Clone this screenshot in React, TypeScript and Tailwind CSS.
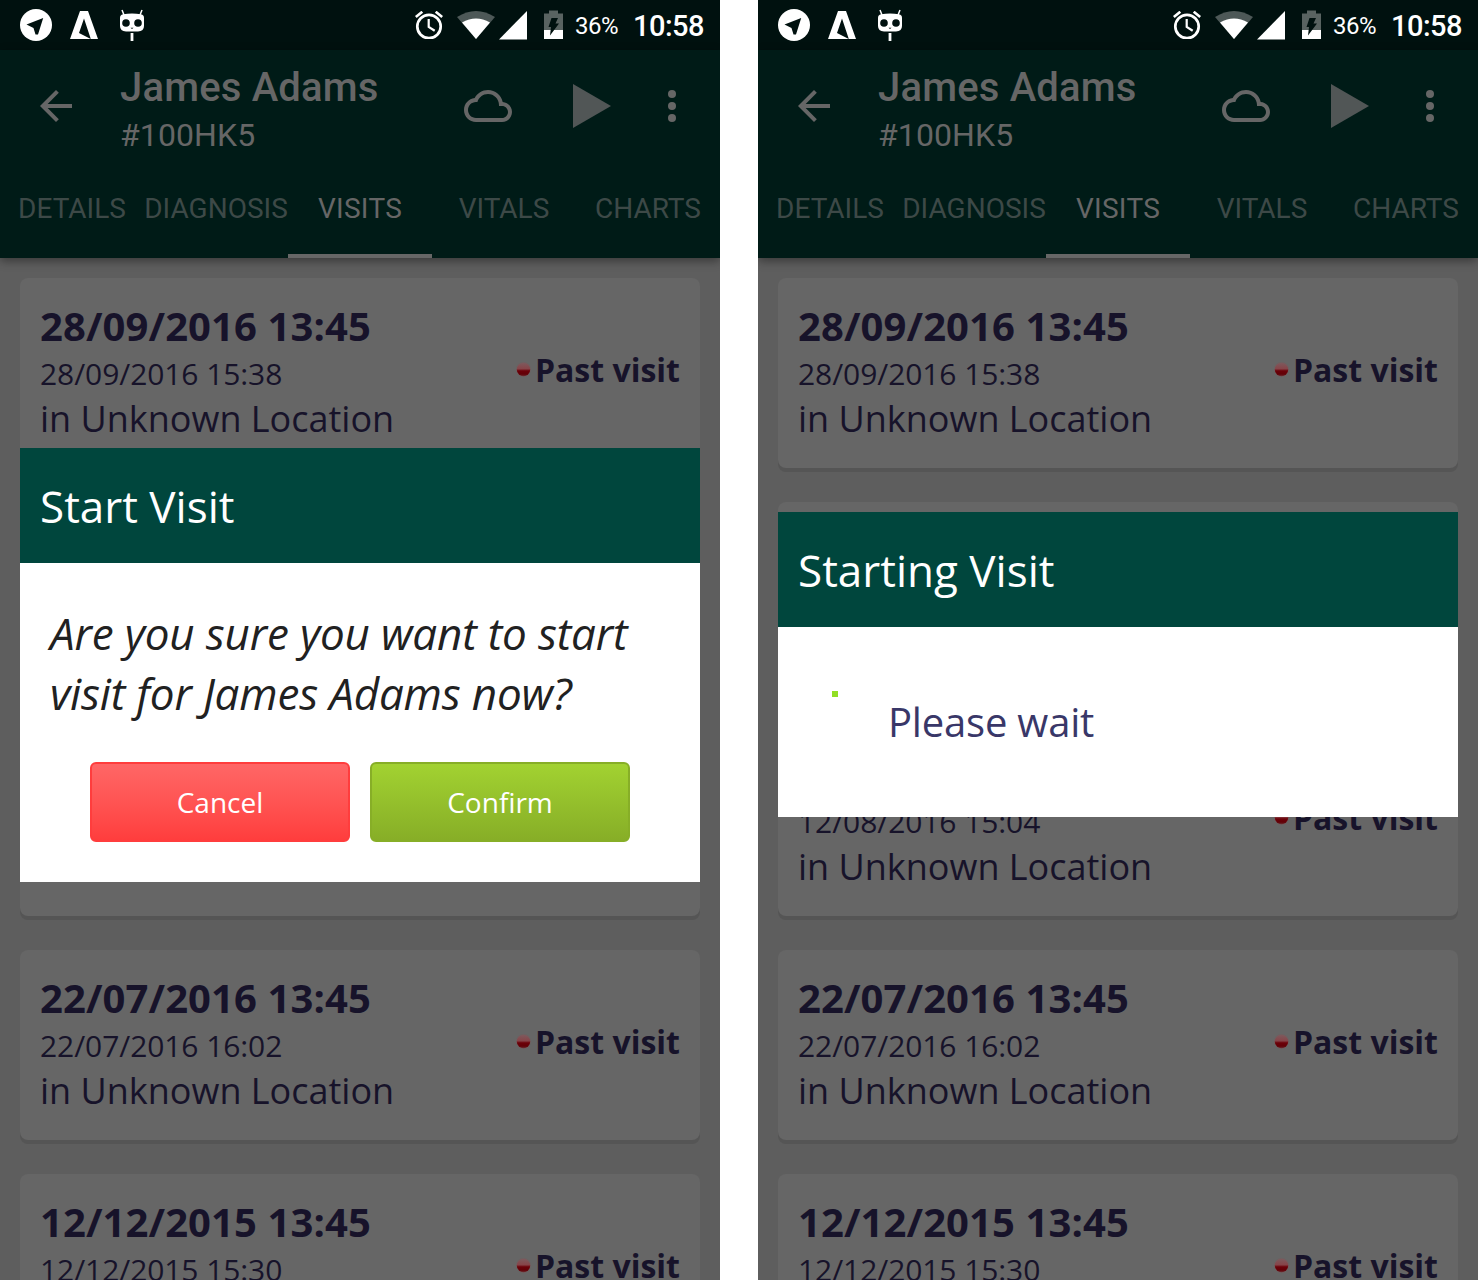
import React from "react";

type Visit = { start?: string; end: string } | null;

const firstVisit: Visit = { start: "28/09/2016 13:45", end: "28/09/2016 15:38" };
const olderVisits: Visit[] = [
  { start: "22/07/2016 13:45", end: "22/07/2016 16:02" },
  { start: "12/12/2015 13:45", end: "12/12/2015 15:30" },
];
const confirmVisits: Visit[] = [firstVisit, null, null, ...olderVisits];
const progressVisits: Visit[] = [firstVisit, null, { end: "12/08/2016 15:04" }, ...olderVisits];

const tabs = ["DETAILS", "DIAGNOSIS", "VISITS", "VITALS", "CHARTS"];

function StatusBar() {
  return (
    <div className="flex h-[50px] shrink-0 items-center bg-[#00110f] pl-5 font-[Roboto] text-white">
      <svg className="h-8 w-8" viewBox="0 0 32 32">
        <circle cx="16" cy="16" r="16" fill="#fff" />
        <path d="M6.5 15.5 23.2 9 18 25.5H15.5L13.5 19Z" fill="#00110f" />
      </svg>
      <svg className="ml-[18px] h-7 w-7" viewBox="0 0 28 28">
        <path d="M10 0h8L28 28h-7.200L14 7.500 9 22 20.800 28H0Z" fill="#fff" />
      </svg>
      <svg className="ml-[22px] h-8 w-6" viewBox="0 0 24 32">
        <path d="M2 1 4 6M22 1 20 6" stroke="#fff" strokeWidth="1.500" />
        <path d="M3 5.200Q12 4 21 5.200 24 5.700 24 9V17Q24 22 18 22.500H6Q0 22 0 17V9Q0 5.700 3 5.200Z" fill="#fff" />
        <path d="M10.600 24h2.800v8h-2.800z" fill="#fff" />
        <circle cx="6" cy="14" r="3.800" fill="#00110f" />
        <circle cx="18" cy="14" r="3.800" fill="#00110f" />
        <path d="M10.500 18.800h3L12 20.100Z" fill="#00110f" />
      </svg>
      <svg className="ml-[271px] h-[28px] w-7" viewBox="0 0 28 28" fill="none" stroke="#fff">
        <circle cx="14" cy="15.500" r="11.700" strokeWidth="2.700" />
        <path d="M13.700 8v8l6 3.800" strokeWidth="2.200" />
        <path d="M.8 6 7.300.8M27.200 6 20.700.8" strokeWidth="2.700" />
      </svg>
      <svg className="ml-[14px] h-7 w-[38px]" viewBox="0 0 38 28">
        <path d="M0 6Q19-6 38 6L19 28Z" fill="#4d5857" />
        <path d="M5 11.500Q19 3.500 33 11.500L19 28Z" fill="#fff" />
      </svg>
      <svg className="ml-1 h-[30px] w-7" viewBox="0 0 28 30">
        <path d="M28 1V29.500H0Z" fill="#fff" />
      </svg>
      <svg className="ml-[17px] h-[30px] w-[19px]" viewBox="0 0 19 30">
        <path d="M0 3.500h5V.5h9v3h5V20H0Z" fill="#596361" />
        <path d="M0 20h19v9H0Z" fill="#fff" />
        <path d="M7.500 8H14l-2.500 5.500H15L6 25.500l1-8.500H4.500Z" fill="#00110f" />
      </svg>
      <span className="ml-3 mt-0.5 w-[47px] text-[24px] leading-none tracking-[-0.5px] whitespace-nowrap">36%</span>
      <span className="ml-[11px] mt-[3px] text-[29px] font-medium leading-none tracking-[-0.5px]">10:58</span>
    </div>
  );
}

function AppHeader() {
  return (
    <header className="z-10 flex h-[208px] shrink-0 flex-col bg-[#001b17] font-[Roboto] text-[#666] shadow-[0_3px_9px_rgba(0,0,0,0.4)]">
      <div className="flex h-28 items-center pl-10">
        <svg className="h-8 w-8" viewBox="4 4 16 16" fill="currentColor">
          <path d="M20 11H7.830l5.590-5.590L12 4l-8 8 8 8 1.410-1.410L7.830 13H20v-2z" />
        </svg>
        <div className="ml-12 flex w-[344px] flex-col pt-[6px]">
          <span className="text-[40px] font-medium leading-[47px] tracking-[0.18px]">James Adams</span>
          <span className="mt-[5px] text-[32px] leading-[38px] tracking-[0.1px]">#100HK5</span>
        </div>
        <svg className="h-8 w-12 shrink-0" viewBox="0 4 24 16" fill="currentColor">
          <path d="M19.350 10.040C18.670 6.590 15.640 4 12 4 9.110 4 6.600 5.640 5.350 8.040 2.340 8.360 0 10.910 0 14c0 3.310 2.690 6 6 6h13c2.760 0 5-2.240 5-5 0-2.640-2.050-4.780-4.650-4.960zM19 18H6c-2.210 0-4-1.790-4-4s1.790-4 4-4h.71C7.370 7.690 9.480 6 12 6c3.040 0 5.500 2.460 5.500 5.500v.5H19c1.660 0 3 1.340 3 3s-1.340 3-3 3z" />
        </svg>
        <svg className="ml-[61px] h-11 w-[38px] shrink-0" viewBox="0 0 38 44">
          <path d="M0 0 38 22 0 44Z" fill="#515656" />
        </svg>
        <svg className="ml-[57px] h-8 w-2 shrink-0" viewBox="0 0 8 32" fill="currentColor">
          <circle cx="4" cy="4" r="4" />
          <circle cx="4" cy="16" r="4" />
          <circle cx="4" cy="28" r="4" />
        </svg>
      </div>
      <nav className="grid h-24 grid-cols-5 text-[28px]">
        {tabs.map((tab) => (
          <div
            key={tab}
            className={
              tab === "VISITS"
                ? "flex items-center justify-center border-b-4 border-[#666] pt-0.5 tracking-[0.3px] text-[#666]"
                : "flex items-center justify-center border-b-4 border-transparent pt-0.5 text-[#3d4947]"
            }
          >
            {tab}
          </div>
        ))}
      </nav>
    </header>
  );
}

function StatusDot() {
  return (
    <svg className="-mt-0.5 h-[15px] w-[15px]" viewBox="0 0 15 15">
      <defs>
        <linearGradient id="dot" x1="0" y1="0" x2="0" y2="1">
          <stop offset="0" stopColor="#7d5a5d" />
          <stop offset="0.45" stopColor="#874449" />
          <stop offset="0.6" stopColor="#6c0008" />
          <stop offset="0.85" stopColor="#620007" />
          <stop offset="1" stopColor="#6a3034" />
        </linearGradient>
      </defs>
      <circle cx="7.500" cy="7.500" r="7.400" fill="#745c5e" opacity="0.6" />
      <circle cx="7.500" cy="7.500" r="6.700" fill="url(#dot)" />
    </svg>
  );
}

function VisitCard({ visit }: { visit: Visit }) {
  return (
    <article className="flex h-[190px] shrink-0 justify-between rounded-lg bg-[#666] p-5 text-[#17132a] shadow-[0_4px_0_#555]">
      {visit && (
        <>
          <div className="flex flex-col whitespace-nowrap">
            <span className="h-[55px] text-[40px] font-bold leading-[55px] tracking-[0.1px]">{visit.start}</span>
            <span className="text-[30px] leading-[41px] tracking-[-0.08px]">{visit.end}</span>
            <span className="text-[36px] leading-[49px]">in Unknown Location</span>
          </div>
          <div className="mt-[50px] flex h-11 items-center gap-1">
            <StatusDot />
            <span className="text-[32px] font-bold leading-[44px]">Past visit</span>
          </div>
        </>
      )}
    </article>
  );
}

function Dialog({ title, className, children }: { title: string; className: string; children: React.ReactNode }) {
  return (
    <section className={`absolute inset-x-5 z-20 flex flex-col bg-white ${className}`}>
      <h2 className="flex h-[115px] shrink-0 items-center bg-[#00463d] px-5 pt-px text-[44px] leading-[60px] text-white">
        {title}
      </h2>
      {children}
    </section>
  );
}

function Phone({ visits, children }: { visits: Visit[]; children: React.ReactNode }) {
  return (
    <div className="relative flex h-[1280px] w-[720px] flex-col overflow-hidden bg-[#5e5e5e]">
      <StatusBar />
      <AppHeader />
      <main className="flex flex-col gap-[34px] px-5 pt-5">
        {visits.map((visit, i) => (
          <VisitCard key={i} visit={visit} />
        ))}
      </main>
      {children}
    </div>
  );
}

export default function App() {
  return (
    <div className="flex h-[1280px] w-[1478px] justify-between overflow-hidden bg-white font-['Open_Sans',sans-serif]">
      <Phone visits={confirmVisits}>
        <Dialog title="Start Visit" className="top-[448px] h-[434px]">
          <p className="px-[30px] pt-10 text-[44px] italic leading-[60px] tracking-[-0.18px] text-[#212121]">
            Are you sure you want to start visit for James Adams now?
          </p>
          <div className="mt-[39px] flex justify-center gap-5 text-[28px] text-white">
            <button className="h-20 w-[260px] rounded-md border-2 border-[#ff3d3d] bg-linear-to-b from-[#ff6666] to-[#ff3d3d]">
              Cancel
            </button>
            <button className="h-20 w-[260px] rounded-md border-2 border-[#87ae27] bg-linear-to-b from-[#a2d231] to-[#87ae27]">
              Confirm
            </button>
          </div>
        </Dialog>
      </Phone>
      <Phone visits={progressVisits}>
        <Dialog title="Starting Visit" className="top-[512px] h-[305px]">
          <div className="flex flex-1 items-center pl-[54px] text-[40px] tracking-[-0.2px] text-[#393768]">
            <span className="mb-14 h-1.5 w-1.5 bg-[#92df24]" />
            <span className="ml-[50px]">Please wait</span>
          </div>
        </Dialog>
      </Phone>
    </div>
  );
}
